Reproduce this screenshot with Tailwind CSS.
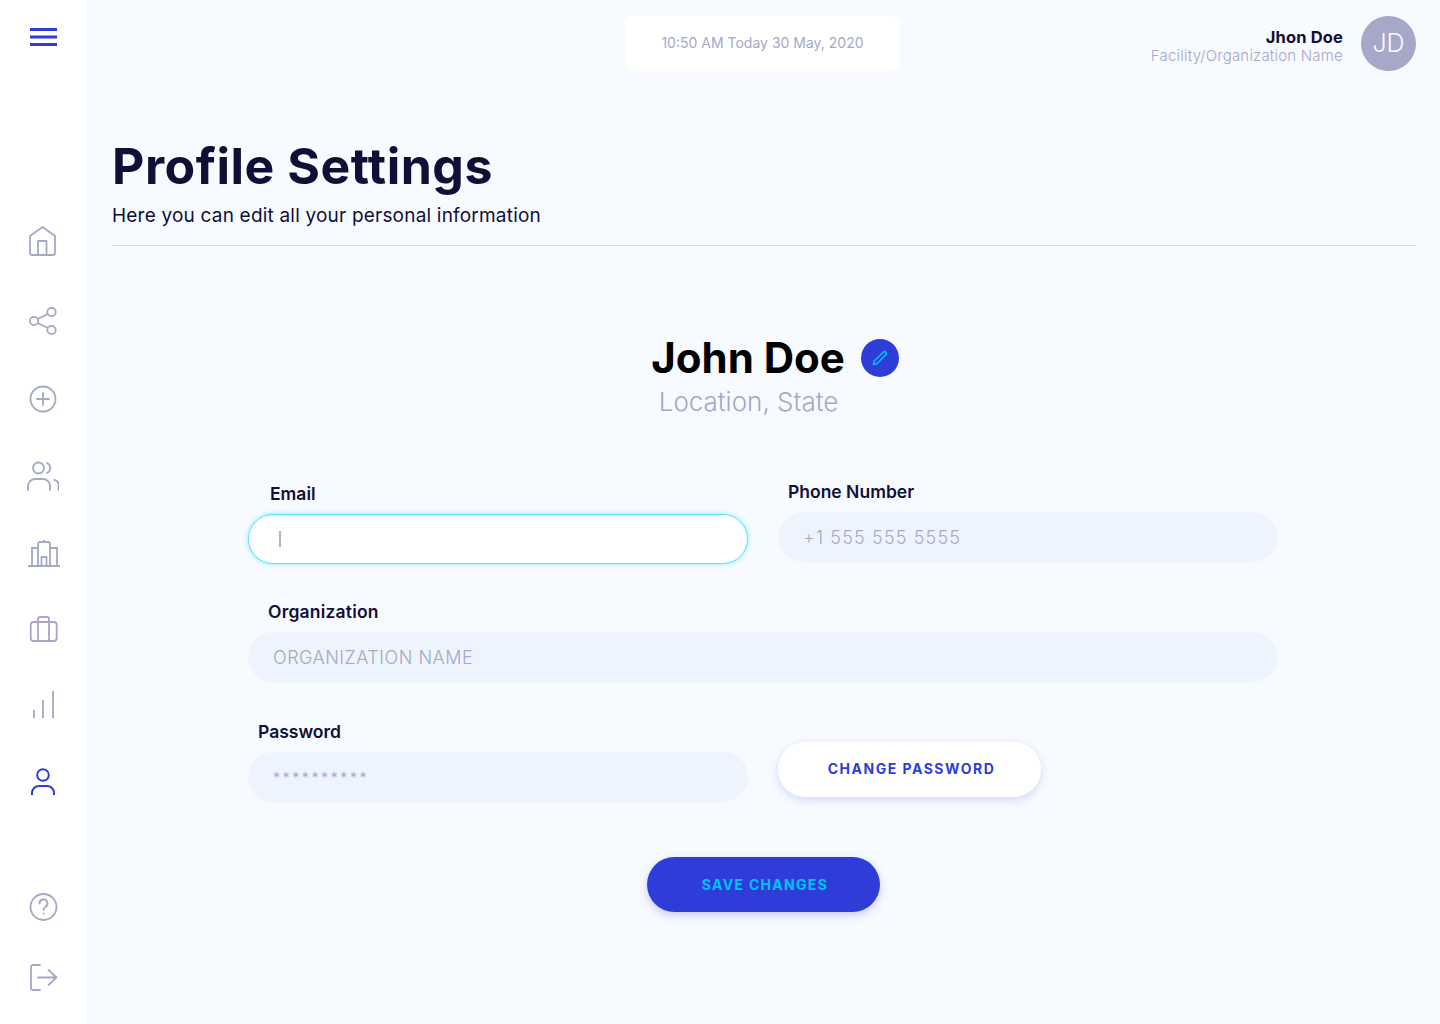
<!DOCTYPE html>
<html lang="en">
<head>
  <meta charset="UTF-8">
  <title>Profile Settings</title>
  <script src="https://cdn.jsdelivr.net/npm/@tailwindcss/browser@4"></script>
</head>
<body class="bg-[#f7faff] font-['Inter',sans-serif]">
  <div class="flex h-[1024px] w-[1440px] overflow-hidden">
    <!-- Sidebar -->
    <aside class="flex w-[86px] shrink-0 flex-col items-center bg-white text-[#a5a8c6]">
      <button class="mt-[24px] text-[#2f3dd8]">
        <svg class="block overflow-visible" width="28" height="26" viewBox="0 0 28 26" fill="none" stroke="currentColor" stroke-width="3"><path d="M1 5.5h27M1 13h27M1 20.5h27"/></svg>
      </button>
      <nav class="mt-[175px] flex flex-col items-center">
        <svg class="mb-[48px] block" width="32" height="32" viewBox="0 0 32 32" fill="none" stroke="currentColor" stroke-width="1.8" stroke-linejoin="round"><path d="M3 11 L15.5 2 L28 11 V28 a2 2 0 0 1 -2 2 H5 a2 2 0 0 1 -2 -2 Z M11 30 V16 H19.5 V30"/></svg>
        <svg class="mb-[46px] block" width="32" height="32" viewBox="0 0 32 32" fill="none" stroke="currentColor" stroke-width="1.8"><circle cx="7" cy="16" r="4.2"/><circle cx="24.5" cy="7" r="4.2"/><circle cx="24.5" cy="25" r="4.2"/><path d="M10.8 14 L20.7 9 M10.8 18 L20.7 23"/></svg>
        <svg class="mb-[45px] block" width="32" height="32" viewBox="0 0 32 32" fill="none" stroke="currentColor" stroke-width="1.8" stroke-linecap="round"><circle cx="16" cy="16" r="12.5"/><path d="M16 10v12M10 16h12"/></svg>
        <svg class="mb-[45px] block" width="32" height="32" viewBox="0 0 32 32" fill="none" stroke="currentColor" stroke-width="1.8" stroke-linecap="round"><circle cx="11.5" cy="8" r="5.5"/><path d="M1 30v-4a7 7 0 0 1 7-7h8a7 7 0 0 1 7 7v4M20 3a5.5 5.5 0 0 1 0 10M27.5 20a5 5 0 0 1 4 5v5"/></svg>
        <svg class="mb-[45px] block overflow-visible" width="32" height="32" viewBox="0 0 32 32" fill="none" stroke="currentColor" stroke-width="1.8"><path d="M1 29h32M5 29V11h6M30 29V11h-7M11 29V7a2 2 0 0 1 2-2h8a2 2 0 0 1 2 2v22M14.5 29v-9h5v9M17 5V3"/></svg>
        <svg class="mb-[43px] block" width="32" height="32" viewBox="0 0 32 32" fill="none" stroke="currentColor" stroke-width="1.8" stroke-linejoin="round"><rect x="3.7" y="8" width="26" height="19" rx="3"/><path d="M11 27V5a2 2 0 0 1 2-2h7a2 2 0 0 1 2 2v22"/></svg>
        <svg class="mb-[45px] block" width="32" height="32" viewBox="0 0 32 32" fill="none" stroke="currentColor" stroke-width="1.8"><path d="M7 21v8M16 11v18M26 2v27"/></svg>
        <svg class="block text-[#2f3dd8]" width="32" height="32" viewBox="0 0 32 32" fill="none" stroke="currentColor" stroke-width="2"><circle cx="16" cy="9" r="5.8"/><path d="M5 29v-2a7 7 0 0 1 7-7h8a7 7 0 0 1 7 7v2"/></svg>
      </nav>
      <div class="mt-auto mb-[31px] flex flex-col items-center">
        <svg class="mb-[38px] block" width="32" height="32" viewBox="0 0 32 32" fill="none" stroke="currentColor" stroke-width="1.8" stroke-linecap="round"><circle cx="16.5" cy="16" r="13"/><path d="M12.5 12.5a4 4 0 1 1 6 3.4c-1.3.8-2 1.4-2 3"/><path d="M16.5 22.5v.2"/></svg>
        <svg class="block" width="32" height="32" viewBox="0 0 32 32" fill="none" stroke="currentColor" stroke-width="1.8" stroke-linecap="round" stroke-linejoin="round"><path d="M13 4H6a2 2 0 0 0-2 2v21a2 2 0 0 0 2 2h7M11 16.5h18.5M21.5 9l8 7.5-8 7.5"/></svg>
      </div>
    </aside>

    <main class="min-w-0 flex-1 pl-[26px] pr-[24px] pt-[16px]">
      <!-- Top bar -->
      <header class="relative flex h-[55px] items-center justify-end">
        <div class="absolute left-[513px] top-0 flex h-[55px] w-[275px] items-center justify-center rounded-lg bg-white pb-[2px] text-[14px] text-[#a5a8c6]">10:50 AM Today 30 May, 2020</div>
        <div class="mr-[18px] pt-[6px] text-right">
          <p class="text-[16.5px] leading-[18px] font-bold tracking-[0.15px] text-[#110f36]">Jhon Doe</p>
          <p class="text-[15px] leading-[19px] font-light tracking-[0.2px] text-[#a5a8c6]">Facility/Organization Name</p>
        </div>
        <div class="flex h-[55px] w-[55px] items-center justify-center rounded-full bg-[#a5a8c6] text-[25px] font-light text-[#f7faff]">JD</div>
      </header>

      <!-- Title -->
      <section class="mt-[66px] border-b border-[#d9dbe4] pb-[16px]">
        <h1 class="text-[50px] leading-[58px] font-bold tracking-[0.5px] text-[#110f36]">Profile Settings</h1>
        <p class="mt-[8px] text-[19px] leading-[26px] tracking-[0.2px] text-[#110f36]">Here you can edit all your personal information</p>
      </section>

      <!-- Profile head -->
      <section class="mt-[87px] flex flex-col items-center pr-[31px]">
        <div class="flex items-center gap-[16px] pl-[53px]">
          <h2 class="text-[42px] leading-[50px] font-bold text-black">John Doe</h2>
          <button class="flex h-[38px] w-[38px] items-center justify-center rounded-full bg-[#2f3dd8] text-[#00c2ff]">
            <svg width="18" height="18" viewBox="0 0 18 18" fill="none" stroke="currentColor" stroke-width="1.6" stroke-linejoin="round"><path d="M2.5 15.5l.7-3.5L12.5 3a1.4 1.4 0 0 1 2 0l.5.5a1.4 1.4 0 0 1 0 2L6 14.8Z"/></svg>
          </button>
        </div>
        <p class="mt-[1px] text-[26px] leading-[36px] font-light text-[#a5a8c6]">Location, State</p>
      </section>

      <!-- Form -->
      <form class="mt-[62px] ml-[136px] w-[1030px]">
        <div class="grid grid-cols-[500px_500px] gap-x-[30px]">
          <div>
            <label class="ml-[22px] block text-[17.5px] leading-[24px] font-semibold text-[#110f36]">Email</label>
            <div class="mt-[8px] flex h-[50px] items-center rounded-full border border-[#5ee3ff] bg-white pl-[30px] shadow-[0_0_4px_#7fe9ff]"><span class="h-[16px] w-[1.5px] bg-[#b5b5b5]"></span></div>
          </div>
          <div class="-mt-[2px]">
            <label class="ml-[10px] block text-[17.5px] leading-[24px] font-semibold text-[#110f36]">Phone Number</label>
            <input class="mt-[8px] h-[50px] w-full rounded-full bg-[#eef4fe] pl-[25px] text-[18px] font-light tracking-[1.15px] placeholder:text-[#a5a8c6]" placeholder="+1 555 555 5555">
          </div>
        </div>
        <label class="mt-[36px] ml-[20px] block text-[17.5px] leading-[24px] font-semibold tracking-[0.2px] text-[#110f36]">Organization</label>
        <input class="mt-[8px] h-[50px] w-full rounded-full bg-[#eef4fe] pl-[25px] text-[18px] font-light tracking-[0.5px] placeholder:text-[#a5a8c6]" placeholder="ORGANIZATION NAME">
        <div class="mt-[38px] grid grid-cols-[500px_263px] items-start gap-x-[30px]">
          <div>
            <label class="ml-[10px] block text-[17.5px] leading-[24px] font-semibold text-[#110f36]">Password</label>
            <input class="mt-[8px] h-[50px] w-full rounded-full bg-[#eef4fe] pl-[25px] text-[14px] tracking-[2.6px] placeholder:text-[#a5a8c6]" placeholder="**********">
          </div>
          <button type="button" class="mt-[22px] h-[55px] rounded-full bg-white pb-[2px] pl-[4px] text-[14px] font-bold tracking-[1.5px] text-[#2f3dd8] shadow-[0_3px_8px_rgba(47,61,216,0.18)]">CHANGE PASSWORD</button>
        </div>
        <div class="mt-[55px] flex justify-center">
          <button type="button" class="h-[55px] w-[233px] rounded-full bg-[#2f3dd8] pl-[4px] text-[14px] font-bold tracking-[1.3px] text-[#00c2ff] shadow-[0_3px_8px_rgba(47,61,216,0.25)]">SAVE CHANGES</button>
        </div>
      </form>
    </main>
  </div>
</body>
</html>
